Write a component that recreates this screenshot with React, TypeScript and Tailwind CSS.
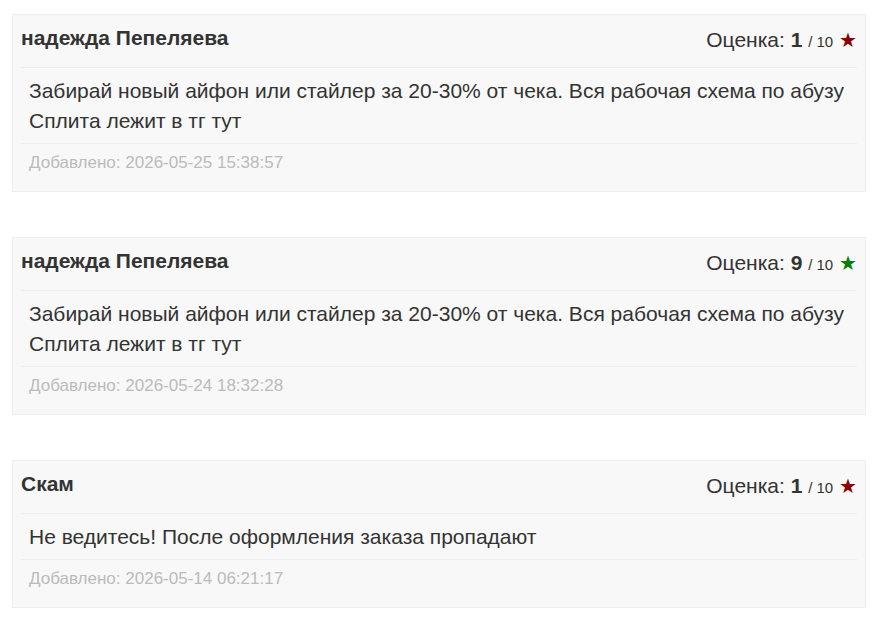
import React from "react";

type Review = { name: string; rating: number; text: string; date: string; good: boolean };

const reviews: Review[] = [
  {
    name: "надежда Пепеляева",
    rating: 1,
    text: "Забирай новый айфон или стайлер за 20-30% от чека. Вся рабочая схема по абузу Сплита лежит в тг тут",
    date: "2026-05-25 15:38:57",
    good: false,
  },
  {
    name: "надежда Пепеляева",
    rating: 9,
    text: "Забирай новый айфон или стайлер за 20-30% от чека. Вся рабочая схема по абузу Сплита лежит в тг тут",
    date: "2026-05-24 18:32:28",
    good: true,
  },
  {
    name: "Скам",
    rating: 1,
    text: "Не ведитесь! После оформления заказа пропадают",
    date: "2026-05-14 06:21:17",
    good: false,
  },
];

export default function App() {
  return (
    <div
      className="min-h-[623px] w-[875px] bg-white pl-[12px] pr-[9px] pt-[14px] text-[#333]"
      style={{ fontFamily: '"Liberation Sans", Arial, sans-serif' }}
    >
      <div className="flex flex-col gap-[45px]">
        {reviews.map((r, i) => (
          <div key={i} className="border border-[#eee] bg-[#f8f8f8] px-[8px] pt-[8px] pb-[9px]">
            <div className="flex items-start justify-between border-b border-[#eee] pb-[10px]">
              <div className="text-[21px] font-bold leading-[30px] text-[#333]">{r.name}</div>
              <div className="pt-[2px] text-[21px] leading-[30px] text-[#333]">
                Оценка: <span className="text-[21px] font-bold">{r.rating}</span>{" "}
                <span className="text-[15px]">/ 10</span>{" "}
                <span
                  className={r.good ? "text-[20px] text-[#008000]" : "text-[20px] text-[#8b0000]"}
                  style={{ fontFamily: '"DejaVu Sans", sans-serif' }}
                >
                  ★
                </span>
              </div>
            </div>
            <div className="border-b border-[#eee] px-[8px] pt-[8px] pb-[7px] text-[21px] leading-[30px] text-[#333]">
              {r.text}
            </div>
            <div className="px-[8px] pt-[8px] pb-[8px] text-[17px] leading-[22px] text-[#bbb]">
              Добавлено: {r.date}
            </div>
          </div>
        ))}
      </div>
    </div>
  );
}
